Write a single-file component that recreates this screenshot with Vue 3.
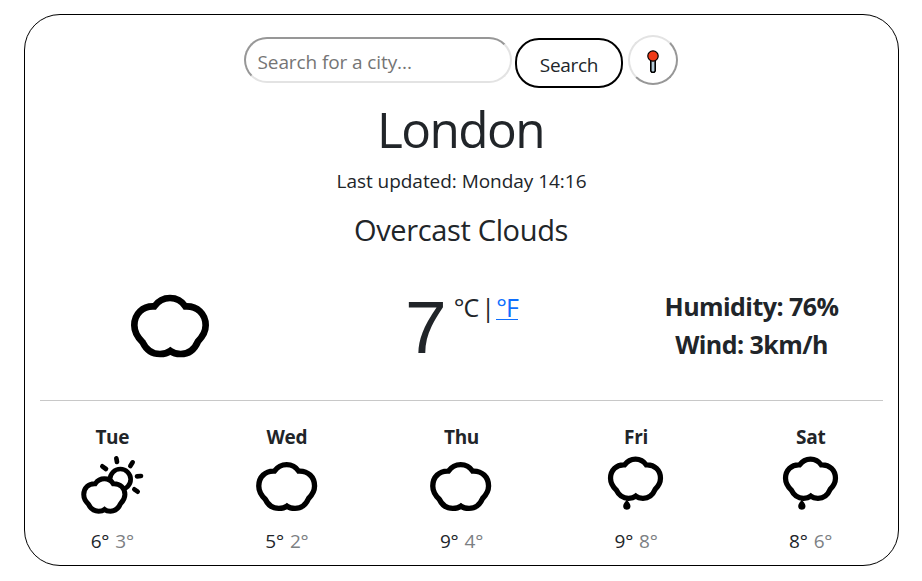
<script setup>
const cloud =
  'M133 79C146 61 160 54 180 54C200 54 214 61 226 79C262 77 287 102 287 136C287 156 280 168 264 184C253 210 236 222 212 222C200 222 190 220 181 213C172 220 162 222 150 222C126 222 109 210 98 187C80 170 73 156 73 136C73 102 98 77 133 79Z'

const days = [
  { name: 'Tue', icon: 'sun', max: 6, min: 3 },
  { name: 'Wed', icon: 'cloud', max: 5, min: 2 },
  { name: 'Thu', icon: 'cloud', max: 9, min: 4 },
  { name: 'Fri', icon: 'rain', max: 9, min: 8 },
  { name: 'Sat', icon: 'rain', max: 8, min: 6 },
]
</script>

<template>
  <main class="card">
    <form class="search" @submit.prevent>
      <input class="field" type="text" placeholder="Search for a city..." />
      <button class="submit" type="submit">Search</button>
      <button class="locate" type="button" aria-label="Current location">
        <svg width="14" height="26" viewBox="0 0 14 26">
          <path d="M4.800 10h4.400v12l-1 1.300h-2.400l-1-1.300z" fill="#b5cbd8" stroke="#000" stroke-width="1.600" />
          <circle cx="7" cy="7" r="5.200" fill="#f03a17" stroke="#000" stroke-width="1.200" />
        </svg>
      </button>
    </form>

    <h1 class="city">London</h1>
    <p class="updated">Last updated: Monday 14:16</p>
    <h2 class="description">Overcast Clouds</h2>

    <section class="current">
      <div class="cell">
        <svg class="main-icon" viewBox="48 33 264 210">
          <path :d="cloud" fill="none" stroke="#000" stroke-width="20" />
        </svg>
      </div>
      <div class="cell reading">
        <strong class="degrees">7</strong>
        <span class="units"><span>°C</span><span class="bar">|</span><a href="#" class="fahrenheit">°F</a></span>
      </div>
      <div class="cell facts">
        <span class="humidity">Humidity: 76%</span>
        <span class="wind">Wind: 3km/h</span>
      </div>
    </section>

    <section class="forecast">
      <div v-for="day in days" :key="day.name" class="day">
        <span class="name">{{ day.name }}</span>
        <svg v-if="day.icon === 'sun'" class="icon" viewBox="36 102 240 180">
          <circle cx="181" cy="178" r="31" fill="#fff" stroke="#000" stroke-width="14" />
          <path
            d="M169 115l2 11M218 127l-7 11M231 169l12-1M223 208l10 7M127 139l11 8"
            fill="none" stroke="#000" stroke-width="14" stroke-linecap="round"
          />
          <path :d="cloud" transform="translate(133 225) scale(.577) translate(-180 -138)" fill="#fff" stroke="#000" stroke-width="26" />
        </svg>
        <svg v-else-if="day.icon === 'cloud'" class="icon" viewBox="34.500 102 240 180">
          <path :d="cloud" transform="translate(153.500 199.500) scale(.782) translate(-180 -138)" fill="none" stroke="#000" stroke-width="20.500" />
        </svg>
        <svg v-else class="icon" viewBox="46.500 102 240 180">
          <path :d="cloud" transform="translate(165 176) scale(.7) translate(-180 -138)" fill="none" stroke="#000" stroke-width="22.500" />
          <path d="M139 238C136 246 128 250 128 258a11 11 0 0 0 22 0C150 250 142 246 139 238Z" />
        </svg>
        <span class="temps"><span>{{ day.max }}°</span><span class="min">{{ day.min }}°</span></span>
      </div>
    </section>
  </main>
</template>

<style>
body {
  background: #fff;
}
</style>

<style scoped>
.card {
  box-sizing: border-box;
  width: 875px;
  height: 552px;
  margin: 14px 0 0 24px;
  border: 1px solid #000;
  border-radius: 36px;
  display: flex;
  flex-direction: column;
  font-family: "Open Sans", "Noto Sans", sans-serif;
  font-size: 19px;
  color: #212529;
}
.search {
  display: flex;
  justify-content: center;
  align-items: flex-start;
  height: 64px;
  padding: 20px 2px 0 0;
}
.field {
  box-sizing: border-box;
  width: 268px;
  height: 46px;
  margin: 2px 3px 0 0;
  padding: 3px 12px 0 12px;
  border: 2px solid;
  border-color: #979797 #e3e3e3 #e3e3e3 #979797;
  border-radius: 24px;
  font: inherit;
  letter-spacing: -0.1px;
  outline: none;
}
.field::placeholder {
  color: #757575;
  opacity: 1;
}
.submit {
  box-sizing: border-box;
  width: 108px;
  height: 50px;
  margin: 3px 5px 0 0;
  padding: 3px 0 0 1px;
  border: 2px solid #000;
  border-radius: 24px;
  background: #fff;
  font: inherit;
  letter-spacing: -0.3px;
  color: #212529;
}
.locate {
  box-sizing: border-box;
  width: 50px;
  height: 50px;
  padding: 3px 0 0;
  border: 2px solid;
  border-color: #e3e3e3 #979797 #979797 #e3e3e3;
  border-radius: 50%;
  background: #fff;
  display: flex;
  justify-content: center;
  align-items: center;
}
.city,
.updated,
.description {
  margin: 0;
  text-align: center;
  font-weight: 400;
}
.city {
  padding-right: 2px;
  font-size: 49.5px;
  line-height: 60px;
  letter-spacing: -1.6px;
}
.updated {
  margin-top: 7px;
  font-size: 19px;
  line-height: 30px;
  letter-spacing: -0.04px;
}
.description {
  margin-top: 14px;
  padding-right: 1px;
  font-size: 29px;
  line-height: 40px;
  letter-spacing: -0.35px;
}
.current {
  box-sizing: border-box;
  height: 151px;
  margin: 0 15px;
  border-bottom: 1px solid #c8c8c8;
  display: grid;
  grid-template-columns: repeat(3, 1fr);
}
.cell {
  display: flex;
  justify-content: center;
  align-items: flex-start;
}
.main-icon {
  width: 88px;
  height: 70px;
  margin: 41px 21px 0 0;
}
.reading {
  gap: 7px;
  padding-top: 36px;
}
.degrees {
  font-family: "Liberation Sans", Arial, sans-serif;
  font-size: 75px;
  font-weight: 400;
  line-height: 83px;
}
.units {
  display: flex;
  font-size: 25px;
  line-height: 34px;
  padding-top: 4px;
  letter-spacing: -0.9px;
}
.bar {
  margin: 0 2px 0 3px;
}
.fahrenheit {
  height: 29px;
  border-bottom: 1px solid #0d6efd;
  color: #0d6efd;
  text-decoration: none;
}
.facts {
  flex-direction: column;
  justify-content: flex-start;
  align-items: center;
  padding: 37px 0 0 18px;
  font-size: 25px;
  font-weight: 700;
  line-height: 38px;
}
.humidity,
.wind {
  letter-spacing: -0.55px;
}
.forecast {
  display: grid;
  grid-template-columns: repeat(5, 1fr);
  padding-top: 21px;
}
.day {
  display: flex;
  flex-direction: column;
  align-items: center;
}
.name {
  font-weight: 700;
  line-height: 30px;
  letter-spacing: -0.3px;
}
.icon {
  width: 80px;
  height: 60px;
  margin: 2px 0 12px;
}
.temps {
  display: flex;
  gap: 6px;
  line-height: 30px;
  letter-spacing: -0.2px;
}
.min {
  color: #7c8083;
}
</style>
